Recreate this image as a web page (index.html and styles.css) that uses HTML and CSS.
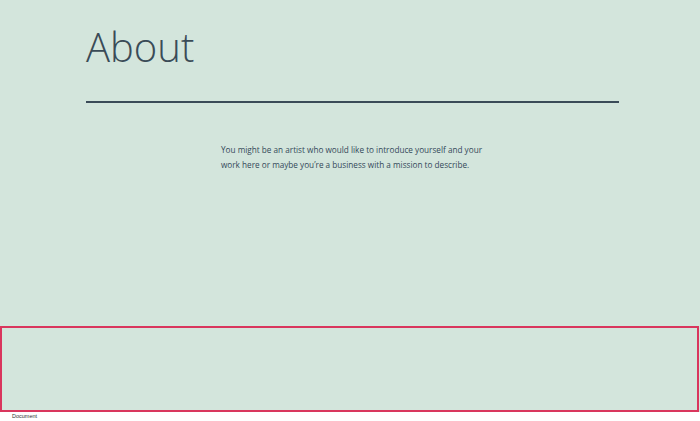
FILE: index.html
```html
<!DOCTYPE html>
<html>
<head>
<meta charset="utf-8">
<link rel="stylesheet" href="styles.css">
</head>
<body>
<div class="page">
  <main class="content">
    <h1 class="title">About</h1>
    <hr class="rule">
    <p class="intro">You might be an artist who would like to introduce yourself and your work here or maybe you’re a business with a mission to describe.</p>
  </main>
  <div class="footer-block"></div>
</div>
<div class="label">Document</div>
</body>
</html>
```
FILE: styles.css
```css
html, body {
  margin: 0;
  padding: 0;
  background: #ffffff;
}
body {
  width: 700px;
  height: 421px;
  overflow: hidden;
  font-family: "Open Sans", "Liberation Sans", sans-serif;
}
.page {
  background: #d3e5dc;
  height: 412px;
  display: flex;
  flex-direction: column;
}
.content {
  flex: 1;
  padding: 0 81px 0 86px;
}
.title {
  margin: 23px 0 0 0;
  font-family: "Open Sans", sans-serif;
  font-weight: 300;
  font-size: 40px;
  line-height: 48px;
  color: #3a4b57;
}
.rule {
  margin: 30px 0 0 0;
  border: 0;
  height: 2px;
  background: #3a4b58;
}
.intro {
  margin: 39px 0 0 135px;
  width: 270px;
  font-size: 8.2px;
  line-height: 15px;
  color: #34495a;
}
.footer-block {
  height: 82px;
  border: 2px solid #d9365d;
  margin-right: 1px;
}
.label {
  font-family: "Liberation Sans", sans-serif;
  font-size: 5.5px;
  color: #333;
  padding-left: 12px;
  line-height: 9px;
}
```
